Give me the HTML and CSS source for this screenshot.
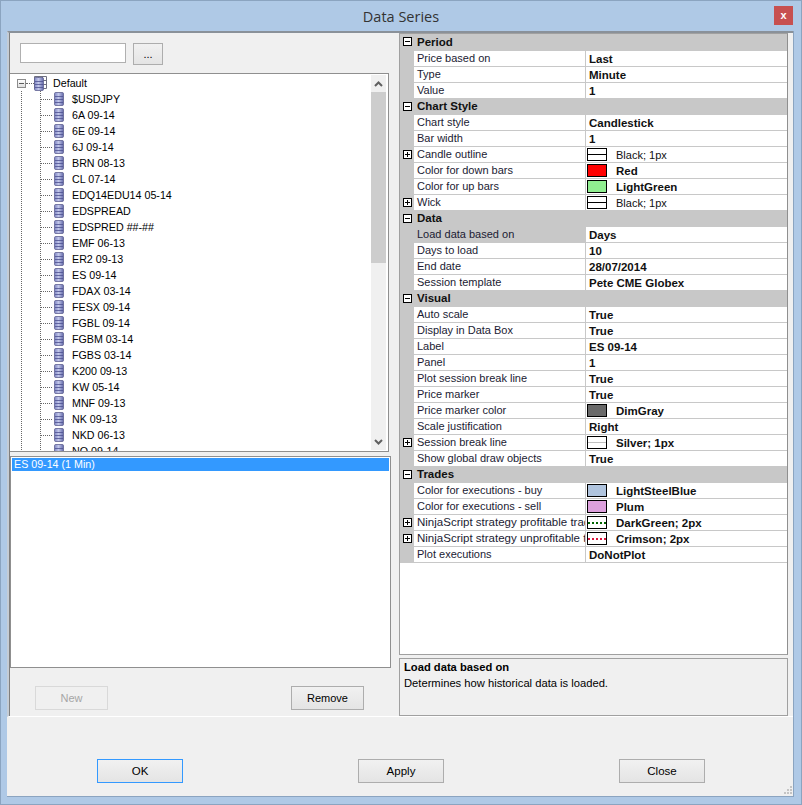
FILE: index.html
```html
<!DOCTYPE html>
<html lang="en">
<head>
<meta charset="utf-8">
<title>Data Series</title>
<link rel="stylesheet" href="styles.css">
</head>
<body>
<svg class="defs" width="0" height="0" aria-hidden="true">
  <defs>
    <linearGradient id="dbg" x1="0" x2="1" y1="0" y2="0">
      <stop offset="0" stop-color="#7f86c4"/>
      <stop offset="0.45" stop-color="#c3c8ea"/>
      <stop offset="1" stop-color="#6268a8"/>
    </linearGradient>
    <symbol id="db" viewBox="0 0 10 14">
      <path d="M0.5 1.5 Q0.5 0.5 2 0.5 H8 Q9.5 0.5 9.5 1.5 V12.5 Q9.5 13.5 8 13.5 H2 Q0.5 13.5 0.5 12.5 Z" fill="url(#dbg)" stroke="#5f6190" stroke-width="0.8"/>
      <path d="M1 4.5 H9 M1 7.5 H9 M1 10.5 H9" stroke="#4c5090" stroke-width="0.8" fill="none"/>
    </symbol>
  </defs>
</svg>
<div class="window">
  <header class="titlebar">
    <span class="title">Data Series</span>
    <button class="win-close">x</button>
  </header>
  <div class="client">
    <div class="main">
      <section class="left">
        <div class="search">
          <div class="search-input"></div>
          <button class="btn btn-dots">...</button>
        </div>
        <div class="tree">
          <div class="tree-body">
            <div class="root">
              <span class="expander"></span>
              <span class="root-conn"></span>
              <span class="root-icon">
                <svg class="table" width="13" height="13" viewBox="0 0 13 13"><path d="M0.5 0.5H12.5V12.5H0.5ZM0.5 4.5H12.5M0.5 8.5H12.5M4.5 0.5V12.5M8.5 0.5V12.5" fill="#fff" stroke="#6f7080"/></svg>
                <svg class="db db-root"><use href="#db"/></svg>
              </span>
              <span class="label">Default</span>
            </div>
            <div class="children">
              <div class="node"><span class="conn"></span><svg class="db"><use href="#db"/></svg><span class="label">$USDJPY</span></div>
              <div class="node"><span class="conn"></span><svg class="db"><use href="#db"/></svg><span class="label">6A 09-14</span></div>
              <div class="node"><span class="conn"></span><svg class="db"><use href="#db"/></svg><span class="label">6E 09-14</span></div>
              <div class="node"><span class="conn"></span><svg class="db"><use href="#db"/></svg><span class="label">6J 09-14</span></div>
              <div class="node"><span class="conn"></span><svg class="db"><use href="#db"/></svg><span class="label">BRN 08-13</span></div>
              <div class="node"><span class="conn"></span><svg class="db"><use href="#db"/></svg><span class="label">CL 07-14</span></div>
              <div class="node"><span class="conn"></span><svg class="db"><use href="#db"/></svg><span class="label">EDQ14EDU14 05-14</span></div>
              <div class="node"><span class="conn"></span><svg class="db"><use href="#db"/></svg><span class="label">EDSPREAD</span></div>
              <div class="node"><span class="conn"></span><svg class="db"><use href="#db"/></svg><span class="label">EDSPRED ##-##</span></div>
              <div class="node"><span class="conn"></span><svg class="db"><use href="#db"/></svg><span class="label">EMF 06-13</span></div>
              <div class="node"><span class="conn"></span><svg class="db"><use href="#db"/></svg><span class="label">ER2 09-13</span></div>
              <div class="node"><span class="conn"></span><svg class="db"><use href="#db"/></svg><span class="label">ES 09-14</span></div>
              <div class="node"><span class="conn"></span><svg class="db"><use href="#db"/></svg><span class="label">FDAX 03-14</span></div>
              <div class="node"><span class="conn"></span><svg class="db"><use href="#db"/></svg><span class="label">FESX 09-14</span></div>
              <div class="node"><span class="conn"></span><svg class="db"><use href="#db"/></svg><span class="label">FGBL 09-14</span></div>
              <div class="node"><span class="conn"></span><svg class="db"><use href="#db"/></svg><span class="label">FGBM 03-14</span></div>
              <div class="node"><span class="conn"></span><svg class="db"><use href="#db"/></svg><span class="label">FGBS 03-14</span></div>
              <div class="node"><span class="conn"></span><svg class="db"><use href="#db"/></svg><span class="label">K200 09-13</span></div>
              <div class="node"><span class="conn"></span><svg class="db"><use href="#db"/></svg><span class="label">KW 05-14</span></div>
              <div class="node"><span class="conn"></span><svg class="db"><use href="#db"/></svg><span class="label">MNF 09-13</span></div>
              <div class="node"><span class="conn"></span><svg class="db"><use href="#db"/></svg><span class="label">NK 09-13</span></div>
              <div class="node"><span class="conn"></span><svg class="db"><use href="#db"/></svg><span class="label">NKD 06-13</span></div>
              <div class="node"><span class="conn"></span><svg class="db"><use href="#db"/></svg><span class="label">NQ 09-14</span></div>
            </div>
          </div>
          <div class="scrollbar">
            <div class="sb-btn"><svg width="9" height="6" viewBox="0 0 9 6"><path d="M1 5 L4.5 1.5 L8 5" fill="none" stroke="#606060" stroke-width="2"/></svg></div>
            <div class="sb-thumb"></div>
            <div class="sb-track"></div>
            <div class="sb-btn"><svg width="9" height="6" viewBox="0 0 9 6"><path d="M1 1 L4.5 4.5 L8 1" fill="none" stroke="#606060" stroke-width="2"/></svg></div>
          </div>
        </div>
        <div class="list">
          <div class="list-item">ES 09-14 (1 Min)</div>
        </div>
        <div class="list-actions">
          <button class="btn btn-small" disabled>New</button>
          <button class="btn btn-small">Remove</button>
        </div>
      </section>
      <section class="right">
        <div class="grid">
          <div class="cat"><span class="exp minus"></span><b>Period</b></div>
          <div class="row"><span class="gut"></span><span class="name">Price based on</span><span class="val">Last</span></div>
          <div class="row"><span class="gut"></span><span class="name">Type</span><span class="val">Minute</span></div>
          <div class="row"><span class="gut"></span><span class="name">Value</span><span class="val">1</span></div>

          <div class="cat"><span class="exp minus"></span><b>Chart Style</b></div>
          <div class="row"><span class="gut"></span><span class="name">Chart style</span><span class="val">Candlestick</span></div>
          <div class="row"><span class="gut"></span><span class="name">Bar width</span><span class="val">1</span></div>
          <div class="row"><span class="gut"><span class="exp plus"></span></span><span class="name">Candle outline</span><span class="val swatched"><span class="swatch pen-black"></span><span class="regular">Black; 1px</span></span></div>
          <div class="row"><span class="gut"></span><span class="name">Color for down bars</span><span class="val swatched"><span class="swatch c-red"></span>Red</span></div>
          <div class="row"><span class="gut"></span><span class="name">Color for up bars</span><span class="val swatched"><span class="swatch c-lightgreen"></span>LightGreen</span></div>
          <div class="row"><span class="gut"><span class="exp plus"></span></span><span class="name">Wick</span><span class="val swatched"><span class="swatch pen-black"></span><span class="regular">Black; 1px</span></span></div>

          <div class="cat"><span class="exp minus"></span><b>Data</b></div>
          <div class="row selected"><span class="gut"></span><span class="name">Load data based on</span><span class="val">Days</span></div>
          <div class="row"><span class="gut"></span><span class="name">Days to load</span><span class="val">10</span></div>
          <div class="row"><span class="gut"></span><span class="name">End date</span><span class="val">28/07/2014</span></div>
          <div class="row"><span class="gut"></span><span class="name">Session template</span><span class="val">Pete CME Globex</span></div>

          <div class="cat"><span class="exp minus"></span><b>Visual</b></div>
          <div class="row"><span class="gut"></span><span class="name">Auto scale</span><span class="val">True</span></div>
          <div class="row"><span class="gut"></span><span class="name">Display in Data Box</span><span class="val">True</span></div>
          <div class="row"><span class="gut"></span><span class="name">Label</span><span class="val">ES 09-14</span></div>
          <div class="row"><span class="gut"></span><span class="name">Panel</span><span class="val">1</span></div>
          <div class="row"><span class="gut"></span><span class="name">Plot session break line</span><span class="val">True</span></div>
          <div class="row"><span class="gut"></span><span class="name">Price marker</span><span class="val">True</span></div>
          <div class="row"><span class="gut"></span><span class="name">Price marker color</span><span class="val swatched"><span class="swatch c-dimgray"></span>DimGray</span></div>
          <div class="row"><span class="gut"></span><span class="name">Scale justification</span><span class="val">Right</span></div>
          <div class="row"><span class="gut"><span class="exp plus"></span></span><span class="name">Session break line</span><span class="val swatched"><span class="swatch pen-silver"></span>Silver; 1px</span></div>
          <div class="row"><span class="gut"></span><span class="name">Show global draw objects</span><span class="val">True</span></div>

          <div class="cat"><span class="exp minus"></span><b>Trades</b></div>
          <div class="row"><span class="gut"></span><span class="name">Color for executions - buy</span><span class="val swatched"><span class="swatch c-steel"></span>LightSteelBlue</span></div>
          <div class="row"><span class="gut"></span><span class="name">Color for executions - sell</span><span class="val swatched"><span class="swatch c-plum"></span>Plum</span></div>
          <div class="row"><span class="gut"><span class="exp plus"></span></span><span class="name name-long">NinjaScript strategy profitable trades</span><span class="val swatched"><span class="swatch pen-green"></span>DarkGreen; 2px</span></div>
          <div class="row"><span class="gut"><span class="exp plus"></span></span><span class="name name-long">NinjaScript strategy unprofitable trades</span><span class="val swatched"><span class="swatch pen-crimson"></span>Crimson; 2px</span></div>
          <div class="row"><span class="gut"></span><span class="name">Plot executions</span><span class="val">DoNotPlot</span></div>
        </div>
        <div class="help">
          <div class="help-title">Load data based on</div>
          <div>Determines how historical data is loaded.</div>
        </div>
      </section>
    </div>
    <footer class="footer">
      <button class="btn btn-wide btn-default">OK</button>
      <button class="btn btn-wide">Apply</button>
      <button class="btn btn-wide">Close</button>
      <svg class="grip" width="8" height="8" viewBox="0 0 8 8"><path d="M6 0h2v2H6zM3 3h2v2H3zM6 3h2v2H6zM0 6h2v2H0zM3 6h2v2H3zM6 6h2v2H6z" fill="#c4c4c4"/></svg>
    </footer>
  </div>
</div>
</body>
</html>
```

FILE: styles.css
```css
* { box-sizing: border-box; }
html, body { margin: 0; padding: 0; }
body {
  width: 802px;
  height: 805px;
  overflow: hidden;
  font-family: "Liberation Sans", Arial, sans-serif;
  font-size: 11.2px;
  color: #000;
  background: #afc9e6;
}
.defs { position: absolute; }
button { font: inherit; color: inherit; padding: 0; margin: 0; }

.window {
  width: 802px;
  height: 805px;
  display: flex;
  flex-direction: column;
  background: #afc9e6;
  border: 1px solid #8ba4c0;
}
.titlebar {
  height: 30px;
  flex: none;
  display: flex;
  align-items: center;
  justify-content: center;
  position: relative;
}
.title {
  font-family: "Open Sans", sans-serif;
  font-size: 14.5px;
  color: #333;
}
.win-close {
  position: absolute;
  left: 773px;
  top: 5px;
  width: 19px;
  height: 19px;
  background: #c75050;
  border: 0;
  color: #fff;
  font-family: "Liberation Sans", sans-serif;
  font-weight: bold;
  font-size: 11px;
  line-height: 17px;
  text-align: center;
}

.client {
  width: 787px;
  height: 766px;
  margin-left: 6px;
  background: #f0f0f0;
  border-right: 1px solid #8ba4c0;
  border-bottom: 1px solid #8ba4c0;
  display: flex;
  flex-direction: column;
}
.main {
  height: 686px;
  flex: none;
  display: flex;
  border-top: 2px solid #8a9199;
  border-left: 2px solid #c4ccd6;
  border-bottom: 1px solid #fff;
}

.left {
  width: 390px;
  flex: none;
  display: flex;
  flex-direction: column;
  border-left: 1px solid #7f7f7f;
}
.search {
  display: flex;
  align-items: flex-start;
  gap: 7px;
  padding: 10px 0 0 10px;
  height: 40px;
  flex: none;
}
.search-input {
  width: 106px;
  height: 20px;
  background: #fff;
  border: 1px solid #b0b0b0;
}
.btn {
  background: linear-gradient(#f1f1f1, #e4e4e4);
  border: 1px solid #adadad;
  font-size: 11px;
}
.btn-dots { width: 30px; height: 22px; }
.tree {
  width: 379px;
  height: 379px;
  flex: none;
  display: flex;
  background: #fff;
  border: 1px solid #8f8f8f;
  border-left: 0;
  font-size: 10.7px;
}
.tree-body {
  flex: 1;
  min-width: 0;
  overflow: hidden;
  padding-top: 1px;
}
.root {
  height: 16px;
  display: flex;
  align-items: center;
  padding-left: 7px;
}
.expander {
  width: 9px;
  height: 9px;
  border: 1px solid #8c8c8c;
  background: linear-gradient(#5c5c5c, #5c5c5c) center / 5px 1px no-repeat, linear-gradient(#fff, #dfdfdf);
  flex: none;
}
.root-conn {
  width: 8px;
  border-top: 1px dotted #666;
  flex: none;
}
.root-icon {
  width: 13px;
  height: 14px;
  flex: none;
  position: relative;
}
.table { position: absolute; left: 0; top: 0; }
.db { width: 10px; height: 14px; flex: none; display: block; }
.db-root { position: absolute; left: 0; top: 1px; }
.root .label { margin-left: 6px; }
.children {
  background-image:
    repeating-linear-gradient(#666 0 1px, transparent 1px 2px),
    repeating-linear-gradient(#666 0 1px, transparent 1px 2px);
  background-size: 1px 100%, 1px 100%;
  background-position: 11px 0, 30px 0;
  background-repeat: no-repeat;
}
.node {
  height: 16px;
  display: flex;
  align-items: center;
  padding-left: 31px;
  white-space: nowrap;
}
.conn {
  width: 11px;
  border-top: 1px dotted #666;
  flex: none;
  margin-right: 2px;
}
.node .label { margin-left: 8px; }

.scrollbar {
  width: 15px;
  flex: none;
  margin: 1px 2px 1px 0;
  display: flex;
  flex-direction: column;
  background: #f0f0f0;
}
.sb-btn {
  height: 17px;
  flex: none;
  display: flex;
  align-items: center;
  justify-content: center;
}
.sb-thumb { height: 171px; flex: none; background: #cdcdcd; }
.sb-track { flex: 1; }

.list {
  width: 381px;
  height: 212px;
  flex: none;
  margin-top: 4px;
  background: #fff;
  border: 1px solid #8f8f8f;
  padding: 1px;
  font-size: 10.7px;
}
.list-item {
  height: 13px;
  line-height: 13px;
  background: #3399ff;
  color: #fff;
  padding-left: 2px;
}
.list-actions {
  display: flex;
  gap: 183px;
  padding: 18px 0 0 25px;
}
.btn-small { width: 73px; height: 24px; }
.btn:disabled {
  background: #f0f0f0;
  border-color: #d9d9d9;
  color: #a6a6a6;
}

.right {
  width: 394px;
  flex: none;
  padding: 0 5px 0 0;
  display: flex;
  flex-direction: column;
}
.grid {
  height: 622px;
  flex: none;
  background: #fff;
  border: 1px solid #a0a0a0;
  border-right-color: #8f8f8f;
}
.cat, .row {
  height: 16px;
  display: flex;
  background: #c8c8c8;
  white-space: nowrap;
}
.cat {
  align-items: center;
  padding-bottom: 2px;
  font-size: 11.5px;
}
.cat:first-child { height: 17px; }
.cat .exp { margin-left: 3px; }
.cat b { margin-left: 5px; color: #111; }
.gut {
  width: 14px;
  flex: none;
  display: flex;
  align-items: center;
  padding-left: 3px;
  margin-bottom: 1px;
}
.exp {
  width: 9px;
  height: 9px;
  flex: none;
  border: 1px solid #000;
  background: #fff;
  background-image: linear-gradient(#000, #000);
  background-size: 5px 1px;
  background-position: center;
  background-repeat: no-repeat;
}
.exp.plus {
  background-image: linear-gradient(#000, #000), linear-gradient(#000, #000);
  background-size: 5px 1px, 1px 5px;
}
.name, .val {
  height: 15px;
  background: #fff;
  overflow: hidden;
}
.name {
  width: 171px;
  flex: none;
  padding-left: 3px;
  line-height: 14px;
  font-size: 11px;
  color: #1b1b33;
}
.name-long { font-size: 11.5px; }
.val {
  flex: 1;
  margin-left: 1px;
  padding-left: 3px;
  line-height: 16px;
  font-size: 11.5px;
  font-weight: bold;
  color: #111;
}
.selected .name { background: transparent; }
.swatched {
  display: flex;
  align-items: flex-start;
  padding-left: 1px;
}
.regular { font-weight: normal; font-size: 11px; }
.swatch {
  width: 20px;
  height: 13px;
  flex: none;
  margin: 1px 9px 0 0;
  border: 1px solid #000;
  background-color: #fff;
}
.c-red { background-color: #f00; }
.c-lightgreen { background-color: #90ee90; }
.c-dimgray { background-color: #696969; }
.c-steel { background-color: #b0c4de; }
.c-plum { background-color: #dda0dd; }
.pen-black { background: linear-gradient(#000, #000) center / 100% 1px no-repeat #fff; }
.pen-silver { background: linear-gradient(#c0c0c0, #c0c0c0) center / 100% 1px no-repeat #fff; }
.pen-green {
  background: repeating-linear-gradient(90deg, #006400 0 2px, transparent 2px 4px) center / 100% 2px no-repeat #fff;
}
.pen-crimson {
  background: repeating-linear-gradient(90deg, #dc143c 0 2px, transparent 2px 4px) center / 100% 2px no-repeat #fff;
}

.help {
  height: 58px;
  flex: none;
  margin-top: 3px;
  border: 1px solid #a0a0a0;
  padding: 0 0 0 4px;
  line-height: 16px;
}
.help-title { font-weight: bold; }

.footer {
  flex: 1;
  position: relative;
  display: flex;
  gap: 175px;
  padding: 42px 0 0 90px;
}
.btn-wide { width: 86px; height: 24px; font-size: 11.5px; }
.btn-default { border-color: #3399ff; }
.grip { position: absolute; right: 1px; bottom: 2px; }
```
